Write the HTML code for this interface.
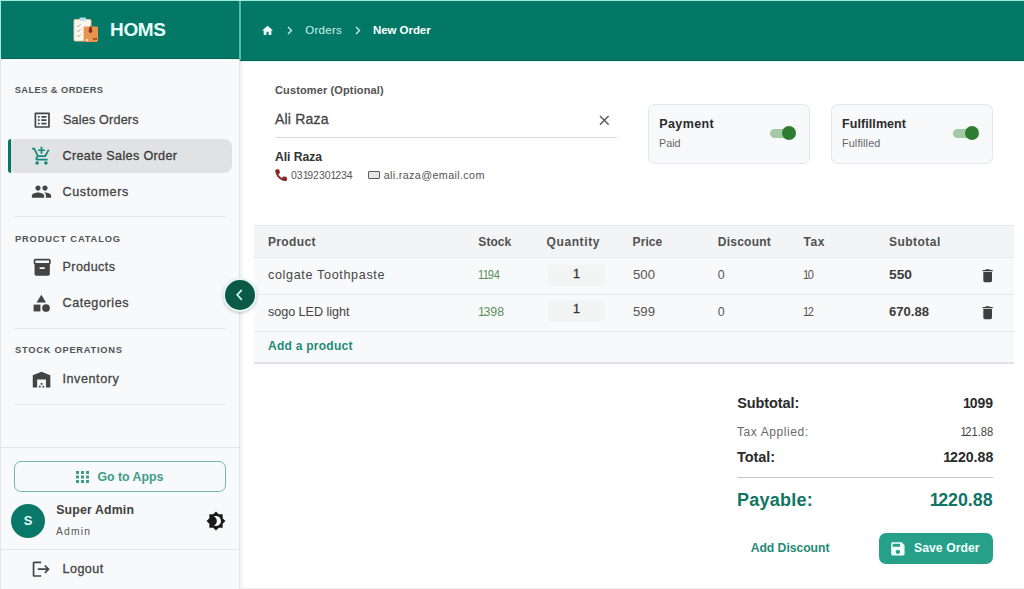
<!DOCTYPE html>
<html><head><meta charset="utf-8">
<style>
*{box-sizing:border-box;margin:0;padding:0}
html,body{width:1024px;height:589px;overflow:hidden;background:#fff;font-family:"Liberation Sans",sans-serif;color:#333}
.a{position:absolute;white-space:nowrap}
svg{position:absolute;overflow:visible}
</style></head><body>
<!-- main top bar -->
<div class="a" style="left:240px;top:0;width:784px;height:61px;background:#047867"></div>
<div class="a" style="left:240px;top:60px;width:784px;height:1px;background:#056658"></div>
<div class="a" style="left:240px;top:61px;width:784px;height:1px;background:#e2f8f4"></div>
<!-- sidebar -->
<div class="a" style="left:0;top:0;width:240px;height:589px;background:#f8f9fa;box-shadow:1px 0 4px rgba(0,0,0,.10)"></div>
<div class="a" style="left:239px;top:58px;width:1px;height:531px;background:#e2e4e6"></div>
<div class="a" style="left:0;top:0;width:240px;height:59px;background:#047867"></div>
<div class="a" style="left:0;top:58px;width:240px;height:1px;background:#056658"></div>
<div class="a" style="left:0;top:59px;width:240px;height:1px;background:#e8f8f5"></div>
<div class="a" style="left:239px;top:0;width:1.6px;height:60px;background:#5ab9ad"></div>
<div class="a" style="left:0;top:0;width:1024px;height:1px;background:#9ee8e0"></div>
<div class="a" style="left:0;top:0;width:1px;height:58px;background:#9ee8e0"></div>
<div class="a" style="left:0;top:58px;width:1px;height:531px;background:#e4e6e8"></div>

<!-- logo -->
<svg style="left:73px;top:17px" width="26" height="26" viewBox="0 0 26 26">
  <rect x="1" y="2.5" width="17" height="21.5" rx="1.2" fill="#fbf6ee" stroke="#efc79d" stroke-width="0.9"/>
  <rect x="6.5" y="0.5" width="6.5" height="3.4" rx="1" fill="#b9def2"/>
  <path d="M4 8.5 l1.3 1.3 2.2-2.4 M4 13.5 l1.3 1.3 2.2-2.4 M4 18.5 l1.3 1.3 2.2-2.4" stroke="#8fb8a8" stroke-width="1" fill="none"/>
  <rect x="10.6" y="9.6" width="14.4" height="15.4" rx="1.4" fill="#e9954f"/>
  <path d="M17.5 8.8 C19 11 19.6 13 19.2 15 Q17.5 17.2 15.8 15 C15.4 13 16 11 17.5 8.8z" fill="#86321a"/>
  <rect x="20.3" y="21" width="1.3" height="2" fill="#7a3a1c"/><rect x="22.4" y="21" width="1.3" height="2" fill="#7a3a1c"/>
  <rect x="12.8" y="22" width="2.4" height="2" fill="#fde7cc"/>
</svg>

<!-- sidebar active -->
<div class="a" style="left:8px;top:139px;width:224px;height:34px;background:#e1e2e3;border-radius:8px"></div>
<div class="a" style="left:8px;top:139px;width:3px;height:34px;background:#037868;border-radius:8px 0 0 8px"></div>

<!-- dividers -->
<div class="a" style="left:14px;top:216px;width:212px;height:1px;background:#e5e7e9"></div>
<div class="a" style="left:14px;top:328px;width:212px;height:1px;background:#e5e7e9"></div>
<div class="a" style="left:14px;top:404px;width:212px;height:1px;background:#e5e7e9"></div>
<div class="a" style="left:0;top:447px;width:239px;height:1px;background:#e2e4e6"></div>
<div class="a" style="left:0;top:549px;width:239px;height:1px;background:#e2e4e6"></div>

<!-- icons sidebar -->
<svg style="left:31.65px;top:109.75px" width="20.4" height="20.4" viewBox="0 0 24 24"><path fill="#444" d="M19 5v14H5V5h14m1.1-2H3.9c-.5 0-.9.4-.9.9v16.2c0 .4.4.9.9.9h16.2c.4 0 .9-.5.9-.9V3.9c0-.5-.5-.9-.9-.9zM11 7h6v2h-6V7zm0 4h6v2h-6v-2zm0 4h6v2h-6zM7 7h2v2H7zm0 4h2v2H7zm0 4h2v2H7z"/></svg>
<svg style="left:31.3px;top:145.5px" width="21" height="20.4" viewBox="0 0 24 24" preserveAspectRatio="none"><path fill="#138a78" d="M11 9h2V6h3V4h-3V1h-2v3H8v2h3v3zm-4 9c-1.1 0-1.990.9-1.990 2S5.9 22 7 22s2-.9 2-2-.9-2-2-2zm10 0c-1.1 0-1.990.9-1.990 2s.89 2 1.990 2 2-.9 2-2-.9-2-2-2zm-9.83-3.250l.03-.12.9-1.630h7.450c.75 0 1.410-.41 1.750-1.030l3.860-7.010L19.420 4h-.01l-1.100 2-2.760 5H8.530l-.13-.27L6.160 6l-.95-2-.94-2H1v2h2l3.600 7.590-1.350 2.450c-.16.28-.25.61-.25.96 0 1.100.9 2 2 2h12v-2H7.420c-.13 0-.25-.11-.25-.25z"/></svg>
<svg style="left:31.3px;top:181.4px" width="21" height="21" viewBox="0 0 24 24"><path fill="#444" d="M16 11c1.66 0 2.99-1.34 2.99-3S17.66 5 16 5c-1.66 0-3 1.34-3 3s1.34 3 3 3zm-8 0c1.66 0 2.99-1.34 2.99-3S9.66 5 8 5C6.34 5 5 6.34 5 8s1.34 3 3 3zm0 2c-2.33 0-7 1.17-7 3.5V19h14v-2.5c0-2.33-4.67-3.5-7-3.5zm8 0c-.29 0-.62.02-.97.05 1.16.84 1.97 1.97 1.97 3.45V19h6v-2.5c0-2.33-4.67-3.5-7-3.5z"/></svg>
<svg style="left:31.7px;top:257px" width="20.4" height="20.4" viewBox="0 0 24 24"><path fill="#444" d="M20 2H4c-1 0-2 .9-2 2v3.01c0 .72.43 1.34 1 1.69V20c0 1.1 1.1 2 2 2h14c.9 0 2-.9 2-2V8.7c.57-.35 1-.97 1-1.69V4c0-1.1-1-2-2-2zm-5 12H9v-2h6v2zm5-7H4V4l16-.02V7z"/></svg>
<svg style="left:31.4px;top:292.7px" width="20.6" height="20.6" viewBox="0 0 24 24"><path fill="#444" d="M12 2l-5.5 9h11z"/><circle fill="#444" cx="17.5" cy="17.5" r="4.5"/><path fill="#444" d="M3 13.5h8v8H3z"/></svg>
<svg style="left:31.24px;top:368.6px" width="21.1" height="21.1" viewBox="0 0 24 24"><path fill="#444" d="M22 21V7L12 3 2 7v14h5v-9h10v9zm-11-2H9v2h2v-2zm2-3h-2v2h2v-2zm2 3h-2v2h2v-2z"/></svg>

<!-- collapse button -->
<div class="a" style="z-index:10;left:222.7px;top:277.8px;width:34px;height:34px;border-radius:50%;background:#0b5a48;border:2px solid #e3f6f0;box-shadow:0 1px 3px rgba(0,0,0,.22)"></div>
<svg style="z-index:11;left:235px;top:289px" width="9" height="12" viewBox="0 0 9 12">
  <path d="M6.8 0.8 l-4.6 5 4.6 5" fill="none" stroke="#d2f7ec" stroke-width="1.7"/>
</svg>

<!-- go to apps -->
<div class="a" style="left:14px;top:461px;width:212px;height:31px;border:1px solid #72b7aa;border-radius:7px"></div>
<svg style="left:76px;top:471px" width="13" height="12" viewBox="0 0 13 12">
  <g fill="#3f9c89">
  <rect x="0" y="0" width="3" height="3"/><rect x="5" y="0" width="3" height="3"/><rect x="10" y="0" width="3" height="3"/>
  <rect x="0" y="4.5" width="3" height="3"/><rect x="5" y="4.5" width="3" height="3"/><rect x="10" y="4.5" width="3" height="3"/>
  <rect x="0" y="9" width="3" height="3"/><rect x="5" y="9" width="3" height="3"/><rect x="10" y="9" width="3" height="3"/>
  </g>
</svg>
<!-- avatar -->
<div class="a" style="left:11px;top:504px;width:34px;height:34px;border-radius:50%;background:#0a7868;color:#e6fbf6;font-weight:bold;font-size:13px;line-height:34px;text-align:center">S</div>
<!-- theme icon -->
<svg style="left:205.5px;top:510.6px" width="20" height="20" viewBox="0 0 24 24">
  <path fill="#1a1a1a" d="M20 8.69V4h-4.69L12 .69 8.69 4H4v4.69L.69 12 4 15.31V20h4.69L12 23.31 15.310 20H20v-4.69L23.31 12 20 8.69zM12 18c-.89 0-1.74-.2-2.5-.55C11.56 16.5 13 14.42 13 12s-1.44-4.5-3.5-5.45C10.26 6.2 11.11 6 12 6c3.31 0 6 2.69 6 6s-2.69 6-6 6z"/>
</svg>
<!-- logout icon -->
<svg style="left:31.2px;top:558.95px" width="20.4" height="20.4" viewBox="0 0 24 24"><path fill="#444" d="M17 7l-1.41 1.41L18.17 11H8v2h10.17l-2.58 2.58L17 17l5-5zM4 5h8V3H4c-1.1 0-2 .9-2 2v14c0 1.1.9 2 2 2h8v-2H4V5z"/></svg>

<!-- breadcrumb -->
<svg style="left:261px;top:24.06px" width="13.1" height="13.1" viewBox="0 0 24 24"><path fill="#effffb" d="M10 20v-6h4v6h5v-8h3L12 3 2 12h3v8z"/></svg>
<svg style="left:287px;top:26px" width="6" height="9" viewBox="0 0 6 9">
  <path d="M1 1 l3.5 3.5 -3.5 3.5" fill="none" stroke="#c9f2ea" stroke-width="1.3"/>
</svg>
<svg style="left:355px;top:26px" width="6" height="9" viewBox="0 0 6 9">
  <path d="M1 1 l3.5 3.5 -3.5 3.5" fill="none" stroke="#c9f2ea" stroke-width="1.3"/>
</svg>

<!-- customer input -->
<div class="a" style="left:275px;top:137px;width:342px;height:1px;background:#d9dbdd"></div>
<svg style="left:595.85px;top:111.55px" width="16.6" height="16.6" viewBox="0 0 24 24"><path fill="#555" d="M19 6.41L17.59 5 12 10.59 6.41 5 5 6.41 10.59 12 5 17.59 6.41 19 12 13.41 17.59 19 19 17.59 13.41 12z"/></svg>
<svg style="left:274px;top:168.2px" width="14.4" height="14.4" viewBox="0 0 24 24"><path fill="#8a2622" stroke="#8a2622" stroke-width="1.6" stroke-linejoin="round" d="M20 15.5c-1.25 0-2.45-.2-3.570-.57a1.020 1.020 0 0 0-1.020.24l-2.200 2.200a15.045 15.045 0 0 1-6.590-6.590l2.200-2.210a.96.96 0 0 0 .25-1A11.360 11.360 0 0 1 8.5 4c0-.55-.45-1-1-1H4c-.55 0-1 .45-1 1 0 9.390 7.610 17 17 17 .55 0 1-.45 1-1v-3.500c0-.55-.45-1-1-1z"/></svg>
<div class="a" style="left:368px;top:171.3px;width:12.2px;height:8px;border:1.2px solid #5c5c5c;border-radius:1px;background:#e6e6e6"></div>

<!-- payment cards -->
<div class="a" style="left:648px;top:103.5px;width:162px;height:60px;background:#f8f9fa;border:1px solid #e4e6e8;border-radius:7px"></div>
<div class="a" style="left:831px;top:103.5px;width:162px;height:60px;background:#f8f9fa;border:1px solid #e4e6e8;border-radius:7px"></div>
<div class="a" style="left:770px;top:129px;width:23px;height:9px;border-radius:5px;background:#a3c9a5"></div>
<div class="a" style="left:782px;top:126px;width:14px;height:14px;border-radius:50%;background:#2e7d32"></div>
<div class="a" style="left:953px;top:129px;width:23px;height:9px;border-radius:5px;background:#a3c9a5"></div>
<div class="a" style="left:965px;top:126px;width:14px;height:14px;border-radius:50%;background:#2e7d32"></div>

<!-- table -->
<div class="a" style="left:254px;top:225px;width:760px;height:138px;background:#f8f9fa"></div>
<div class="a" style="left:254px;top:225px;width:760px;height:32px;background:#f3f4f5"></div>
<div class="a" style="left:254px;top:225px;width:760px;height:1px;background:#e6e8ea"></div>
<div class="a" style="left:254px;top:257px;width:760px;height:1px;background:#e6e8ea"></div>
<div class="a" style="left:254px;top:294px;width:760px;height:1px;background:#e6e8ea"></div>
<div class="a" style="left:254px;top:331px;width:760px;height:1px;background:#e6e8ea"></div>
<div class="a" style="left:254px;top:362px;width:760px;height:2px;background:#dfe1e3"></div>
<!-- qty inputs -->
<div class="a" style="left:548px;top:265px;width:57px;height:21px;background:#f3f4f4;border-radius:4px;font-size:12.5px;line-height:19px;text-align:center;color:#333;-webkit-text-stroke:0.3px #333">1</div>
<div class="a" style="left:548px;top:300px;width:57px;height:22px;background:#f3f4f4;border-radius:4px;font-size:12.5px;line-height:19px;text-align:center;color:#333;-webkit-text-stroke:0.3px #333">1</div>
<!-- trash -->
<svg style="left:978.6px;top:266.9px" width="17.3" height="17.3" viewBox="0 0 24 24"><path fill="#3f3f3f" d="M6 19c0 1.1.9 2 2 2h8c1.1 0 2-.9 2-2V7H6v12zM19 4h-3.5l-1-1h-5l-1 1H5v2h14V4z"/></svg>
<svg style="left:978.6px;top:303.8px" width="17.3" height="17.3" viewBox="0 0 24 24"><path fill="#3f3f3f" d="M6 19c0 1.1.9 2 2 2h8c1.1 0 2-.9 2-2V7H6v12zM19 4h-3.5l-1-1h-5l-1 1H5v2h14V4z"/></svg>

<!-- summary -->
<div class="a" style="left:737px;top:477px;width:256px;height:1px;background:#c8c8c8"></div>
<div class="a" style="left:879px;top:533px;width:114px;height:31px;background:#27a08a;border-radius:7px"></div>
<svg style="left:889.4px;top:540.3px" width="17.8" height="17.8" viewBox="0 0 24 24"><path fill="#f2fffc" d="M17 3H5c-1.11 0-2 .9-2 2v14c0 1.1.89 2 2 2h14c1.1 0 2-.9 2-2V7l-4-4zm-5 16c-1.66 0-3-1.34-3-3s1.34-3 3-3 3 1.34 3 3-1.340 3-3 3zm3-10H5V5h10v4z"/></svg>
<div class="a" style="left:240px;top:588px;width:784px;height:1px;background:#eceeef"></div>

<div class="a t" id="homs" style="top:19.72px;font-size:19px;line-height:19px;color:#e6fffa;font-weight:bold;letter-spacing:-0.333px;left:110.00px;">HOMS</div>
<div class="a t" id="s1" style="top:86.33px;font-size:9.3px;line-height:9.3px;color:#505456;font-weight:bold;letter-spacing:0.434px;left:14.70px;">SALES &amp; ORDERS</div>
<div class="a t" id="n1" style="top:114.33px;font-size:12.6px;line-height:12.6px;color:#444444;-webkit-text-stroke:0.3px #444444;letter-spacing:0.182px;left:63.00px;">Sales Orders</div>
<div class="a t" id="n2" style="top:150.33px;font-size:12.6px;line-height:12.6px;color:#3c3c3c;-webkit-text-stroke:0.3px #3c3c3c;letter-spacing:0.353px;left:62.50px;">Create Sales Order</div>
<div class="a t" id="n3" style="top:185.98px;font-size:12.6px;line-height:12.6px;color:#444444;-webkit-text-stroke:0.3px #444444;letter-spacing:0.607px;left:62.50px;">Customers</div>
<div class="a t" id="s2" style="top:234.68px;font-size:9.3px;line-height:9.3px;color:#505456;font-weight:bold;letter-spacing:0.847px;left:15.00px;">PRODUCT CATALOG</div>
<div class="a t" id="n4" style="top:260.98px;font-size:12.6px;line-height:12.6px;color:#444444;-webkit-text-stroke:0.3px #444444;letter-spacing:0.400px;left:62.50px;">Products</div>
<div class="a t" id="n5" style="top:297.33px;font-size:12.6px;line-height:12.6px;color:#444444;-webkit-text-stroke:0.3px #444444;letter-spacing:0.566px;left:62.50px;">Categories</div>
<div class="a t" id="s3" style="top:346.13px;font-size:9.3px;line-height:9.3px;color:#505456;font-weight:bold;letter-spacing:0.751px;left:15.00px;">STOCK OPERATIONS</div>
<div class="a t" id="n6" style="top:373.08px;font-size:12.6px;line-height:12.6px;color:#444444;-webkit-text-stroke:0.3px #444444;letter-spacing:0.555px;left:62.50px;">Inventory</div>
<div class="a t" id="ga" style="top:471.39px;font-size:12.3px;line-height:12.3px;color:#3f9c89;font-weight:bold;letter-spacing:-0.001px;left:97.50px;">Go to Apps</div>
<div class="a t" id="sa" style="top:503.59px;font-size:12.3px;line-height:12.3px;color:#404040;font-weight:bold;letter-spacing:0.172px;left:56.20px;">Super Admin</div>
<div class="a t" id="ad" style="top:526.68px;font-size:10.3px;line-height:10.3px;color:#555555;letter-spacing:1.203px;left:56.00px;">Admin</div>
<div class="a t" id="lo" style="top:563.33px;font-size:12.6px;line-height:12.6px;color:#444444;-webkit-text-stroke:0.3px #444444;letter-spacing:0.454px;left:62.50px;">Logout</div>
<div class="a t" id="bo" style="top:25.27px;font-size:11.5px;line-height:11.5px;color:#c9f2ea;letter-spacing:0.269px;left:305.30px;">Orders</div>
<div class="a t" id="bn" style="top:25.27px;font-size:11.5px;line-height:11.5px;color:#ffffff;font-weight:bold;letter-spacing:-0.059px;left:373.00px;">New Order</div>
<div class="a t" id="co" style="top:85.19px;font-size:11px;line-height:11px;color:#525252;font-weight:bold;letter-spacing:0.125px;left:275.00px;">Customer (Optional)</div>
<div class="a t" id="ci" style="top:112.35px;font-size:14px;line-height:14px;color:#444444;-webkit-text-stroke:0.3px #444444;letter-spacing:0.208px;left:275.00px;">Ali Raza</div>
<div class="a t" id="cn" style="top:150.97px;font-size:12.2px;line-height:12.2px;color:#333333;font-weight:bold;letter-spacing:-0.060px;left:275.00px;">Ali Raza</div>
<div class="a t" id="cp" style="transform:scaleX(0.971);transform-origin:left;top:169.76px;font-size:10.8px;line-height:10.8px;color:#555555;left:290.70px;">03<span style="margin-right:-0.12em">1</span>9230<span style="margin-right:-0.12em">1</span>234</div>
<div class="a t" id="ce" style="top:169.76px;font-size:10.8px;line-height:10.8px;color:#555555;letter-spacing:0.337px;left:383.70px;">ali.raza@email.com</div>
<div class="a t" id="p1" style="top:117.82px;font-size:12.5px;line-height:12.5px;color:#2b2b2b;font-weight:bold;letter-spacing:0.415px;left:659.20px;">Payment</div>
<div class="a t" id="p2" style="top:138.06px;font-size:10.8px;line-height:10.8px;color:#666666;letter-spacing:-0.008px;left:659.00px;">Paid</div>
<div class="a t" id="f1" style="top:117.82px;font-size:12.5px;line-height:12.5px;color:#2b2b2b;font-weight:bold;letter-spacing:0.080px;left:842.00px;">Fulfillment</div>
<div class="a t" id="f2" style="top:138.06px;font-size:10.8px;line-height:10.8px;color:#666666;letter-spacing:0.135px;left:842.00px;">Fulfilled</div>
<div class="a t" id="h1" style="top:235.84px;font-size:12px;line-height:12px;color:#505050;font-weight:bold;letter-spacing:0.343px;left:268.00px;">Product</div>
<div class="a t" id="h2" style="top:235.84px;font-size:12px;line-height:12px;color:#505050;font-weight:bold;letter-spacing:0.078px;left:478.30px;">Stock</div>
<div class="a t" id="h3" style="top:235.84px;font-size:12px;line-height:12px;color:#505050;font-weight:bold;letter-spacing:0.590px;left:546.60px;">Quantity</div>
<div class="a t" id="h4" style="top:235.84px;font-size:12px;line-height:12px;color:#505050;font-weight:bold;letter-spacing:0.060px;left:632.60px;">Price</div>
<div class="a t" id="h5" style="top:235.84px;font-size:12px;line-height:12px;color:#505050;font-weight:bold;letter-spacing:0.237px;left:717.80px;">Discount</div>
<div class="a t" id="h6" style="top:235.84px;font-size:12px;line-height:12px;color:#505050;font-weight:bold;letter-spacing:0.602px;left:803.40px;">Tax</div>
<div class="a t" id="h7" style="top:235.84px;font-size:12px;line-height:12px;color:#505050;font-weight:bold;letter-spacing:0.471px;left:889.00px;">Subtotal</div>
<div class="a t" id="r1a" style="top:269.23px;font-size:12.6px;line-height:12.6px;color:#454545;letter-spacing:0.647px;left:268.00px;">colgate Toothpaste</div>
<div class="a t" id="r1b" style="transform:scaleX(0.893);transform-origin:left;top:269.40px;font-size:12.4px;line-height:12.4px;color:#5a915c;left:478.30px;"><span style="margin-right:-0.12em">1</span><span style="margin-right:-0.12em">1</span>94</div>
<div class="a t" id="r1d" style="transform:scaleX(1.063);transform-origin:left;top:269.40px;font-size:12.4px;line-height:12.4px;color:#555555;left:632.60px;">500</div>
<div class="a t" id="r1e" style="top:269.40px;font-size:12.4px;line-height:12.4px;color:#555555;left:717.80px;">0</div>
<div class="a t" id="r1f" style="transform:scaleX(0.892);transform-origin:left;top:269.40px;font-size:12.4px;line-height:12.4px;color:#555555;left:803.40px;"><span style="margin-right:-0.12em">1</span>0</div>
<div class="a t" id="r1g" style="transform:scaleX(1.112);transform-origin:left;top:269.40px;font-size:12.4px;line-height:12.4px;color:#3d3d3d;font-weight:bold;left:889.00px;">550</div>
<div class="a t" id="r2a" style="top:306.23px;font-size:12.6px;line-height:12.6px;color:#444444;letter-spacing:-0.040px;left:268.00px;">sogo LED light</div>
<div class="a t" id="r2b" style="transform:scaleX(0.996);transform-origin:left;top:306.40px;font-size:12.4px;line-height:12.4px;color:#5a915c;left:478.30px;"><span style="margin-right:-0.12em">1</span>398</div>
<div class="a t" id="r2d" style="transform:scaleX(1.063);transform-origin:left;top:306.40px;font-size:12.4px;line-height:12.4px;color:#555555;left:632.60px;">599</div>
<div class="a t" id="r2e" style="top:306.40px;font-size:12.4px;line-height:12.4px;color:#555555;left:717.80px;">0</div>
<div class="a t" id="r2f" style="transform:scaleX(0.892);transform-origin:left;top:306.40px;font-size:12.4px;line-height:12.4px;color:#555555;left:803.40px;"><span style="margin-right:-0.12em">1</span>2</div>
<div class="a t" id="r2g" style="transform:scaleX(1.055);transform-origin:left;top:306.40px;font-size:12.4px;line-height:12.4px;color:#3d3d3d;font-weight:bold;left:889.00px;">670.88</div>
<div class="a t" id="ap" style="top:340.44px;font-size:12px;line-height:12px;color:#1f8a76;font-weight:bold;letter-spacing:0.264px;left:268.00px;">Add a product</div>
<div class="a t" id="st" style="top:396.13px;font-size:14.5px;line-height:14.5px;color:#2b2b2b;font-weight:bold;letter-spacing:-0.104px;left:737.30px;">Subtotal:</div>
<div class="a t" id="sv" style="transform:scaleX(0.964);transform-origin:right;top:396.13px;font-size:14.5px;line-height:14.5px;color:#2b2b2b;font-weight:bold;right:31.20px;"><span style="margin-right:-0.08em">1</span>099</div>
<div class="a t" id="tl" style="top:425.54px;font-size:12px;line-height:12px;color:#6a6a6a;letter-spacing:0.571px;left:737.00px;">Tax Applied:</div>
<div class="a t" id="tv" style="transform:scaleX(0.930);transform-origin:right;top:425.54px;font-size:12px;line-height:12px;color:#444444;right:31.20px;"><span style="margin-right:-0.12em">1</span>21.88</div>
<div class="a t" id="ot" style="top:450.03px;font-size:14.5px;line-height:14.5px;color:#2b2b2b;font-weight:bold;letter-spacing:-0.078px;left:737.00px;">Total:</div>
<div class="a t" id="ov" style="transform:scaleX(0.975);transform-origin:right;top:450.03px;font-size:14.5px;line-height:14.5px;color:#2b2b2b;font-weight:bold;right:31.20px;"><span style="margin-right:-0.08em">1</span>220.88</div>
<div class="a t" id="pl" style="top:490.76px;font-size:18px;line-height:18px;color:#107564;font-weight:bold;letter-spacing:0.250px;left:737.00px;">Payable:</div>
<div class="a t" id="pv" style="transform:scaleX(0.990);transform-origin:right;top:490.76px;font-size:18px;line-height:18px;color:#107564;font-weight:bold;right:31.20px;"><span style="margin-right:-0.08em">1</span>220.88</div>
<div class="a t" id="adisc" style="top:541.77px;font-size:12.2px;line-height:12.2px;color:#1f8a76;font-weight:bold;letter-spacing:-0.038px;left:750.70px;">Add Discount</div>
<div class="a t" id="so" style="top:541.77px;font-size:12.2px;line-height:12.2px;color:#f2fffc;font-weight:bold;letter-spacing:0.061px;left:914.00px;">Save Order</div>
</body></html>
